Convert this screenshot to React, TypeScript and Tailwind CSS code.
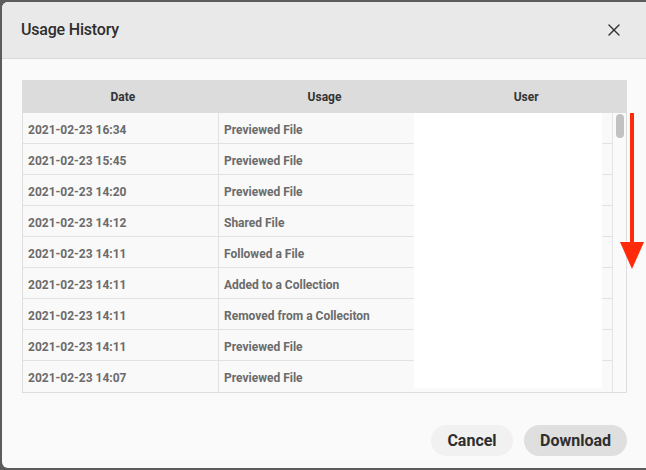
import { X } from 'lucide-react';

type Row = { date: string; usage: string };

const rows: Row[] = [
  { date: '2021-02-23 16:34', usage: 'Previewed File' },
  { date: '2021-02-23 15:45', usage: 'Previewed File' },
  { date: '2021-02-23 14:20', usage: 'Previewed File' },
  { date: '2021-02-23 14:12', usage: 'Shared File' },
  { date: '2021-02-23 14:11', usage: 'Followed a File' },
  { date: '2021-02-23 14:11', usage: 'Added to a Collection' },
  { date: '2021-02-23 14:11', usage: 'Removed from a Colleciton' },
  { date: '2021-02-23 14:11', usage: 'Previewed File' },
  { date: '2021-02-23 14:07', usage: 'Previewed File' },
];

export default function App() {
  return (
    <div className="h-[470px] w-[646px] overflow-hidden bg-[#5c5c5c] pl-[2px] pt-[2px] font-['Roboto',sans-serif]">
      <div className="flex h-[466px] w-[650px] flex-col overflow-hidden rounded-[6px] bg-[#fafafa]">
        <header className="flex h-[57px] shrink-0 items-center justify-between border-b border-[#d9d9d9] bg-[#e9e9e9] pl-[19px] pr-[28px]">
          <h1 className="text-[16px] font-medium tracking-[-0.2px] text-[#2e2e2e]">Usage History</h1>
          <X size={20} strokeWidth={1.6} className="text-[#333]" />
        </header>

        <div className="relative mt-[21px] ml-[20px] w-[605px]">
          <div className="grid h-[33px] grid-cols-3 bg-[#dcdcdc] text-[12px] font-bold text-[#333]">
            <div className="flex items-center justify-center">Date</div>
            <div className="flex items-center justify-center">Usage</div>
            <div className="flex items-center justify-center">User</div>
          </div>

          <div className="relative flex border-x border-b border-[#dedede]">
            <div className="w-[589px]">
              {rows.map((r, i) => (
                <div
                  key={i}
                  className="grid h-[31px] grid-cols-[196px_197px_196px] border-b border-[#e2e2e2] bg-[#f9f9f9] text-[12px] font-bold text-[#6b6b6b] last:border-b-0"
                >
                  <div className="flex items-center border-r border-[#e2e2e2] pl-[5px] pt-[3px]">{r.date}</div>
                  <div className="flex items-center pl-[5px] pt-[3px]">{r.usage}</div>
                  <div></div>
                </div>
              ))}
            </div>
            <div className="w-[14px] border-l border-[#e4e4e4] bg-[#fafafa] pt-[1px]">
              <div className="mx-auto h-[24px] w-[8px] rounded-full bg-[#c2c2c2]" />
            </div>
            <div className="absolute left-[391px] top-0 h-[275px] w-[188px] bg-white" />
          </div>
        </div>

        <div className="mt-auto mb-[12px] mr-[25px] flex justify-end gap-[11px]">
          <button className="h-[31px] w-[82px] rounded-full bg-[#f1f1f1] text-[16px] font-bold text-[#2e2e2e]">
            Cancel
          </button>
          <button className="h-[31px] w-[103px] rounded-full bg-[#dfdfdf] text-[16px] font-bold text-[#2e2e2e]">
            Download
          </button>
        </div>
      </div>

      <svg className="absolute left-[619px] top-[113px]" width="26" height="157" viewBox="0 0 26 157">
        <rect x="11" y="0" width="4" height="132" fill="#ff2a0a" />
        <polygon points="1,129 25,129 13,156" fill="#ff2a0a" />
      </svg>
    </div>
  );
}
